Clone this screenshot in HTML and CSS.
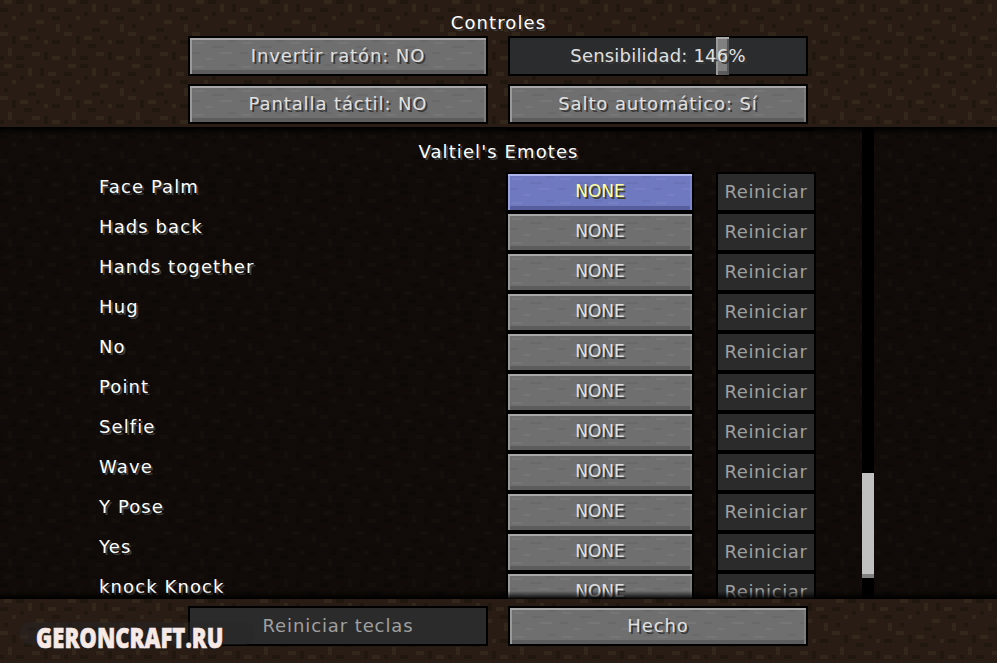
FILE: index.html
```html
<!DOCTYPE html>
<html lang="es">
<head>
  <meta charset="UTF-8">
  <title>Controles</title>
  <link rel="stylesheet" href="styles.css">
</head>
<body>
  <div class="screen">
    <header class="top">
      <h1 class="title">Controles</h1>
      <div class="btn-grid">
        <div class="btn wide">Invertir ratón: NO</div>
        <div class="btn wide slider"><span class="handle" style="left: 69.6%"></span><span class="slider-text">Sensibilidad: 146%</span></div>
        <div class="btn wide">Pantalla táctil: NO</div>
        <div class="btn wide">Salto automático: Sí</div>
      </div>
    </header>

    <main class="list">
      <div class="entries">
        <div class="peek"><span class="peek-key"></span><span class="peek-reset"></span></div>
        <div class="category">Valtiel's Emotes</div>
        <div class="row"><span class="label">Face Palm</span><div class="btn key hover">NONE</div><div class="btn reset off">Reiniciar</div></div>
        <div class="row"><span class="label">Hads back</span><div class="btn key">NONE</div><div class="btn reset off">Reiniciar</div></div>
        <div class="row"><span class="label">Hands together</span><div class="btn key">NONE</div><div class="btn reset off">Reiniciar</div></div>
        <div class="row"><span class="label">Hug</span><div class="btn key">NONE</div><div class="btn reset off">Reiniciar</div></div>
        <div class="row"><span class="label">No</span><div class="btn key">NONE</div><div class="btn reset off">Reiniciar</div></div>
        <div class="row"><span class="label">Point</span><div class="btn key">NONE</div><div class="btn reset off">Reiniciar</div></div>
        <div class="row"><span class="label">Selfie</span><div class="btn key">NONE</div><div class="btn reset off">Reiniciar</div></div>
        <div class="row"><span class="label">Wave</span><div class="btn key">NONE</div><div class="btn reset off">Reiniciar</div></div>
        <div class="row"><span class="label">Y Pose</span><div class="btn key">NONE</div><div class="btn reset off">Reiniciar</div></div>
        <div class="row"><span class="label">Yes</span><div class="btn key">NONE</div><div class="btn reset off">Reiniciar</div></div>
        <div class="row"><span class="label">knock Knock</span><div class="btn key">NONE</div><div class="btn reset off">Reiniciar</div></div>
      </div>
      <div class="scrollbar"><div class="thumb"></div></div>
    </main>

    <footer class="bottom">
      <div class="btn-grid">
        <div class="btn wide off">Reiniciar teclas</div>
        <div class="btn wide">Hecho</div>
      </div>
    </footer>

    <div class="watermark"><span class="watermark-text">GERONCRAFT.RU</span></div>
  </div>
</body>
</html>
```

FILE: styles.css
```css
:root {
  --dirt: url("data:image/svg+xml,%3Csvg xmlns='http://www.w3.org/2000/svg' width='64' height='64' shape-rendering='crispEdges'%3E%3Crect width='64' height='64' fill='%23281c14'/%3E%3Cg fill='%2333261a'%3E%3Crect x='4' y='0' width='8' height='4'/%3E%3Crect x='28' y='4' width='4' height='8'/%3E%3Crect x='48' y='8' width='8' height='4'/%3E%3Crect x='12' y='16' width='4' height='4'/%3E%3Crect x='36' y='20' width='8' height='4'/%3E%3Crect x='56' y='24' width='4' height='8'/%3E%3Crect x='0' y='32' width='8' height='4'/%3E%3Crect x='20' y='36' width='8' height='4'/%3E%3Crect x='44' y='40' width='4' height='4'/%3E%3Crect x='8' y='48' width='4' height='8'/%3E%3Crect x='32' y='52' width='8' height='4'/%3E%3Crect x='52' y='56' width='8' height='4'/%3E%3C/g%3E%3Cg fill='%2320170f'%3E%3Crect x='16' y='0' width='8' height='4'/%3E%3Crect x='40' y='4' width='4' height='8'/%3E%3Crect x='0' y='8' width='8' height='4'/%3E%3Crect x='20' y='12' width='4' height='4'/%3E%3Crect x='52' y='16' width='8' height='4'/%3E%3Crect x='4' y='24' width='4' height='4'/%3E%3Crect x='28' y='28' width='8' height='4'/%3E%3Crect x='12' y='36' width='4' height='8'/%3E%3Crect x='36' y='36' width='4' height='4'/%3E%3Crect x='52' y='40' width='8' height='4'/%3E%3Crect x='24' y='44' width='8' height='4'/%3E%3Crect x='44' y='52' width='4' height='8'/%3E%3Crect x='0' y='56' width='4' height='4'/%3E%3Crect x='16' y='56' width='8' height='4'/%3E%3C/g%3E%3C/svg%3E");
  --stone: url("data:image/svg+xml,%3Csvg xmlns='http://www.w3.org/2000/svg' width='48' height='24' shape-rendering='crispEdges'%3E%3Cg fill='%23fff' fill-opacity='.05'%3E%3Crect x='4' y='4' width='10' height='2'/%3E%3Crect x='30' y='14' width='12' height='2'/%3E%3Crect x='16' y='20' width='6' height='2'/%3E%3C/g%3E%3Cg fill='%23000' fill-opacity='.05'%3E%3Crect x='22' y='8' width='12' height='2'/%3E%3Crect x='2' y='14' width='8' height='2'/%3E%3Crect x='38' y='2' width='8' height='2'/%3E%3C/g%3E%3C/svg%3E");
}
* {
  box-sizing: border-box;
}
body {
  margin: 0;
  background: #281c14;
  font-family: "DejaVu Sans", sans-serif;
  font-size: 18px;
  letter-spacing: 1.1px;
  color: #fff;
}
.screen {
  position: relative;
  display: flex;
  flex-direction: column;
  width: 997px;
  height: 663px;
  overflow: hidden;
}

/* header and footer */
.top {
  height: 127px;
  background-image: var(--dirt);
}
.title {
  height: 36px;
  margin: 0;
  padding-top: 14px;
  font-size: 18px;
  font-weight: normal;
  line-height: 18px;
  text-align: center;
  text-shadow: 2px 2px 0 #3f3f3f;
}
.btn-grid {
  display: grid;
  grid-template-columns: 300px 300px;
  gap: 8px 20px;
  padding-left: 188px;
}
.bottom {
  height: 64px;
  padding-top: 7px;
  background-image: var(--dirt);
}

/* buttons */
.btn {
  display: flex;
  align-items: center;
  justify-content: center;
  height: 40px;
  padding-bottom: 2px;
  border: 2px solid #000;
  background: var(--stone), #6f6f6f;
  box-shadow: inset 0 2px 0 #a8a8a8, inset 2px 0 0 #9a9a9a, inset -2px 0 0 #7c7c7c, inset 0 -4px 0 #5c5c5c;
  color: #e0e0e0;
  text-shadow: 2px 2px 0 #383838;
  white-space: nowrap;
}
.btn.wide {
  letter-spacing: .9px;
}
.btn.off, .btn.slider {
  background: #2b2b2b;
  box-shadow: none;
  color: #a0a0a0;
  text-shadow: none;
}
.btn.slider {
  position: relative;
  background: #2a2c2e;
  color: #e0e0e0;
  letter-spacing: .2px;
  text-shadow: 2px 2px 0 #383838;
}
.slider-text {
  position: relative;
}
.handle {
  position: absolute;
  top: -1px;
  bottom: -1px;
  width: 13px;
  background: #808080;
  box-shadow: inset 0 2px 0 #aaa, inset 2px 0 0 #9a9a9a, inset -2px 0 0 #555, inset 0 -4px 0 #5c5c5c;
}
.btn.hover {
  background: var(--stone), #6f79c0;
  box-shadow: inset 0 2px 0 #adb4ec, inset 2px 0 0 #9aa2e0, inset -2px 0 0 #7c85cc, inset 0 -4px 0 #565e9e;
  color: #ffffa0;
  text-shadow: 2px 2px 0 #3f3f28;
}

/* key binding list */
.list {
  position: relative;
  display: flex;
  height: 472px;
  overflow: hidden;
  background-image: linear-gradient(rgba(0, 0, 0, .6), rgba(0, 0, 0, .6)), var(--dirt);
}
.list::before, .list::after {
  content: "";
  position: absolute;
  left: 0;
  right: 0;
  height: 8px;
}
.list::before {
  top: 0;
  background: linear-gradient(#000, transparent);
}
.list::after {
  bottom: 0;
  background: linear-gradient(transparent, #000);
}
.entries {
  width: 862px;
}
.peek {
  display: flex;
  height: 3px;
  margin-top: 1px;
  padding-left: 507px;
}
.peek-key {
  width: 185px;
  background: #000;
}
.peek-reset {
  width: 98px;
  margin-left: 25px;
  background: #000;
}
.category {
  display: flex;
  align-items: center;
  justify-content: center;
  width: 997px;
  height: 41px;
  padding-bottom: 1px;
  text-shadow: 2px 2px 0 #3f3f3f;
}
.row {
  display: flex;
  height: 40px;
  padding-left: 99px;
}
.label {
  width: 407px;
  padding-top: 5px;
  line-height: 20px;
  text-shadow: 2px 2px 0 #3f3f3f;
}
.key {
  flex: none;
  width: 188px;
  letter-spacing: 0;
  font-size: 17px;
}
.reset {
  flex: none;
  width: 100px;
  margin-left: 22px;
  letter-spacing: .6px;
}
.scrollbar {
  width: 12px;
  background: #000;
}
.thumb {
  height: 105px;
  margin-top: 346px;
  background: #c0c0c0;
  box-shadow: inset 0 -4px 0 #808080;
}

/* site watermark */
.watermark {
  position: absolute;
  left: 20px;
  top: 622px;
  width: 235px;
  height: 23px;
  padding-left: 16px;
  border-radius: 10px;
  background: rgba(40, 40, 40, .4);
}
.watermark-text {
  display: block;
  font-family: "Open Sans", sans-serif;
  font-size: 29px;
  font-weight: 800;
  letter-spacing: 0;
  line-height: 30px;
  color: #f7e9e6;
  -webkit-text-stroke: .6px #f7e9e6;
  text-shadow: 1px 1px 1px #222;
  white-space: nowrap;
  transform: scaleX(.76);
  transform-origin: left;
}
```
